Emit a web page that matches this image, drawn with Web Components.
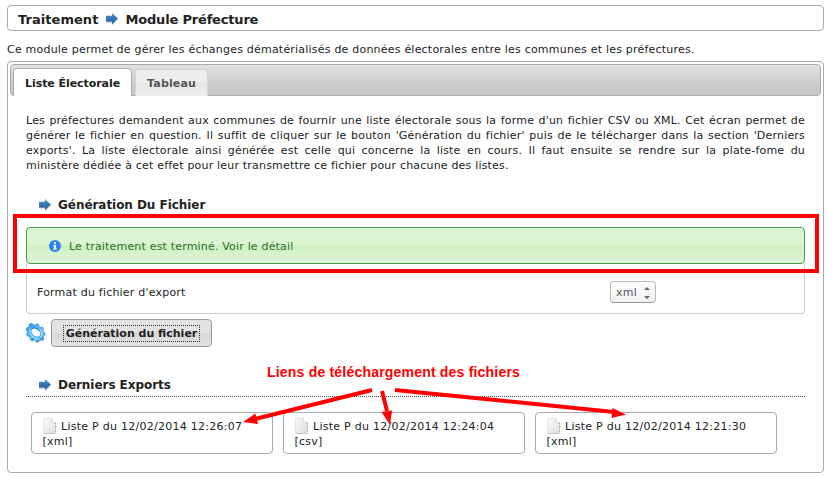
<!DOCTYPE html>
<html lang="fr">
<head>
<meta charset="utf-8">
<title>Module Préfecture</title>
<style>
body{margin:0;background:#fff;color:#222;font:11px/15px "DejaVu Sans",Verdana,sans-serif;letter-spacing:.21px}
</style>
</head>
<body>
<prefecture-page></prefecture-page>
<script>
function define(name, html) {
  const t = document.createElement('template');
  t.innerHTML = html;
  customElements.define(name, class extends HTMLElement {
    constructor() {
      super();
      this.attachShadow({mode: 'open'}).append(t.content.cloneNode(true));
    }
  });
}

define('arrow-icon', `<style>:host{display:block;width:12px;height:12px}svg{display:block}</style>
<svg width="12" height="12" viewBox="0 0 12 12"><defs><linearGradient id="a" x2="0" y2="1"><stop stop-color="#5f9acb"/><stop offset=".5" stop-color="#3774ae"/><stop offset="1" stop-color="#245f9a"/></linearGradient></defs>
<path d="M.5 9.500H6.500V11.800L12 6.500" fill="none" stroke="#000" stroke-opacity=".13" stroke-width="1.2"/>
<path d="M0 2.800H6V0L12 5.600 6 11.200V8.700H0Z" fill="url(#a)"/></svg>`);

define('info-icon', `<style>:host{display:block;width:12px;height:12px}svg{display:block}</style>
<svg width="12" height="12" viewBox="0 0 12 12"><circle cx="6" cy="6" r="6" fill="#2a82f8"/><path d="M5 2H7V4H5ZM4.3 5H7V8.5H7.8V9.8H4.3V8.5H5V6.2H4.3Z" fill="#fff"/></svg>`);

define('gear-icon', `<style>:host{display:block;width:20px;height:20px}svg{display:block}</style>
<svg width="20" height="20" viewBox="0 0 20 20"><defs><linearGradient id="g" x2="1" y2="1"><stop stop-color="#2a8fe4"/><stop offset=".35" stop-color="#4db4f8"/><stop offset=".7" stop-color="#7bd0fc"/><stop offset="1" stop-color="#1470c4"/></linearGradient></defs>
<g transform="translate(-.3 -.2)"><path fill="url(#g)" stroke="#2187d8" stroke-width=".7" fill-rule="evenodd" d="M5 .8 7.2 1.3 8 2.4 9.6 2.3 10.8 1 13 1.8 13.2 3.6 14.5 4.6 16.6 4.3 17.9 6.3 17 7.9 17.6 9.3 19.3 10 19.2 12.3 17.9 12.9 17.500 14.3 18.2 16.2 16.8 17.7 15.1 17.2 13.5 17.8 12.8 19.3 10.7 19.3 9.8 17.9 8.1 17.4 6.5 18.2 4.5 16.9 4.5 15.1 3.3 13.3 1.8 13.4.8 11.3 1.9 9.8 1.6 8.200.3 7.2.8 5 2.4 4.6 3.4 3.600 3.2 1.9ZM7 5C4.600 6.200 4.900 9 6.600 11.500 8.500 14.200 12.300 15.300 14.200 13.200 15.700 11.300 14.500 8.400 12.600 6.500 11 4.900 8.800 4.200 7 5Z"/>
<path fill="none" stroke="#b4e6ff" stroke-width=".9" d="M4.3 5.400C2.900 8.900 6 15.600 11.500 15.900M14.500 6.800C16.500 9.500 16.500 12 15.300 14.400"/>
<path fill="none" stroke="#1261ad" stroke-width="1" d="M5.800 7C7 4.300 11 4.700 13.500 8.100M6 16.600 8 16.100M11 18.300H12.300"/></g></svg>`);

define('file-icon', `<style>:host{display:block;width:13px;height:16px}svg{display:block}</style>
<svg width="14" height="16" viewBox="0 0 14 16"><defs><linearGradient id="f" x2="1" y2="1"><stop stop-color="#fafafa"/><stop offset="1" stop-color="#dedede"/></linearGradient></defs>
<path d="M.5.5H8.5L12.5 4.5V15.5H.5Z" fill="url(#f)" stroke="#e6e6e6"/><path d="M.5 15.5H12.5" fill="none" stroke="#c6c6c6"/><path d="M8.5.5V4.5H12.5" fill="#fafafa" stroke="#dcdcdc"/><path d="M12.5 5V15" stroke="#9a9a9a" stroke-dasharray="1 1"/></svg>`);

define('page-title', `<style>
:host{display:flex;box-sizing:border-box;height:26px;padding:2px 10px 0;border:1px solid #aaa;border-radius:4px;align-items:center;font-weight:bold;font-size:13px;letter-spacing:-.18px}
arrow-icon{margin:0 7px 0 8px}
::slotted([slot=section]){letter-spacing:.05px}
</style><slot name="section"></slot><arrow-icon></arrow-icon><slot></slot>`);

define('tab-item', `<style>
:host{display:block;box-sizing:border-box;height:27px;margin-top:1px;padding:6px 11px 0;border:1px solid #d3d3d3;border-bottom:0;border-radius:4px 4px 0 0;background:linear-gradient(#eee 0 50%,#e6e6e6 50%,#ededed);color:#555;font-weight:bold;letter-spacing:.15px}
:host([active]){height:28px;margin-top:0;padding-top:7px;border-color:#aaa;background:#fff;color:#212121;letter-spacing:-.06px}
</style><slot></slot>`);

define('tab-bar', `<style>
:host{display:flex;box-sizing:border-box;height:32px;padding:3px 2px 0;gap:3px;border:1px solid #aaa;border-radius:4px;background:linear-gradient(#e2e2e2,#c9c9c9 75%);align-items:flex-start}
</style><slot></slot>`);

define('sub-title', `<style>
:host{display:flex;align-items:center;gap:7px;height:20px;padding-left:13px;font-weight:bold;font-size:12px;letter-spacing:-.05px}
</style><arrow-icon></arrow-icon><slot></slot>`);

define('status-message', `<style>
:host{display:flex;box-sizing:border-box;height:37px;align-items:center;gap:8px;padding:1px 0 0 22px;border:1px solid #4aa04a;border-radius:4px;color:#2c6e2c;letter-spacing:.18px;background:linear-gradient(#dbf4d2 0 48%,#cff0c3 50%,#e1f3da)}
info-icon{margin-top:-1px}
</style><info-icon></info-icon><slot></slot>`);

define('mini-select', `<style>
:host{display:flex;box-sizing:border-box;width:46px;height:22px;padding:1px 5px 0;border:1px solid #bbb;border-bottom-color:#999;border-radius:4px;align-items:center;justify-content:space-between;background:linear-gradient(#fff,#f0f0f0);color:#555}
svg{display:block;margin-right:-1px}
</style><slot></slot><svg width="8" height="13" viewBox="0 0 8 13"><path d="M1 4 4 1 7 4ZM1 10H7L4 13Z" fill="#666"/></svg>`);

define('form-field', `<style>
:host{display:grid;box-sizing:border-box;grid-template-columns:573px auto;justify-content:start;align-items:center;height:50px;padding:6px 10px 0;border:1px solid #ccc;border-top:0;border-radius:0 0 4px 4px}
::slotted([slot=label]){padding-top:1px}
</style><slot name="label"></slot><slot></slot>`);

define('push-button', `<style>
:host{display:block}
button{box-sizing:border-box;display:block;width:161px;height:28px;padding:0;border:1px solid #999;border-radius:4px;background:linear-gradient(#e2e2e2 0 50%,#d6d6d6 50%,#e4e4e4);color:#212121;font:bold 11px/15px "DejaVu Sans",sans-serif;letter-spacing:0}
span{display:block;box-sizing:border-box;height:17px;margin:0 11px;border:1px dotted #333;white-space:nowrap}
</style><button><span><slot></slot></span></button>`);

define('export-card', `<style>
:host{display:block;box-sizing:border-box;width:242px;height:42px;padding:5px 10px 0 11px;border:1px solid #aaa;border-radius:4px;letter-spacing:.26px}
div{height:16px;white-space:nowrap;display:flex;align-items:center;gap:5px}
p{margin:0 0 0 -.5px}
</style><div><file-icon></file-icon><slot></slot></div><p><slot name="format"></slot></p>`);

define('red-notes', `<style>
:host{position:absolute;inset:0;pointer-events:none}
svg{position:absolute;left:0;top:0}
b{position:absolute;left:267px;top:363px;font:bold 14px/18px "Liberation Sans",Arial,sans-serif;letter-spacing:.2px;color:red;white-space:nowrap}
</style><svg width="827" height="477" viewBox="0 0 827 477"><rect x="15" y="216" width="802" height="55" fill="none" stroke="red" stroke-width="4"/>
<path d="M372 390 255 419M382 391 387 411M395 390 614 412" fill="none" stroke="red" stroke-width="4"/>
<path d="M243 422 255.500 413.500 258 424ZM390 425 381.500 412 392 410.500ZM626 414.500 611.500 418 612.500 408Z" fill="red"/></svg><b><slot></slot></b>`);

define('prefecture-page', `<style>
:host{display:block;position:relative;box-sizing:border-box;width:827px;height:477px;padding:5px 3px 0 7px;overflow:hidden}
.intro{margin:11px 0 4px;height:15px;white-space:nowrap}
.panel{box-sizing:border-box;height:412px;border:1px solid #aaa;border-radius:4px;padding:2px}
.body{width:779px;padding:17px 0 0 16px}
.l{text-align:justify;text-align-last:justify;white-space:nowrap;height:15px;letter-spacing:.19px}
.l:last-child{text-align-last:left}
.first{margin:22px 0 12px}
.action{display:flex;gap:5px;margin-top:5px;align-items:center}
.second{margin-top:27px;height:22px;border-bottom:1px dotted #555}
.cards{display:flex;gap:10px;padding:15px 5px 0}
</style>
<page-title><span slot="section">Traitement</span><span>Module Préfecture</span></page-title>
<div class="intro"><span>Ce module permet de gérer les échanges dématérialisés de données électorales entre les communes et les préfectures.</span></div>
<div class="panel">
<tab-bar><tab-item active>Liste Électorale</tab-item><tab-item>Tableau</tab-item></tab-bar>
<div class="body">
<div class="text"><div class="l">Les préfectures demandent aux communes de fournir une liste électorale sous la forme d'un fichier CSV ou XML. Cet écran permet de</div>
<div class="l">générer le fichier en question. Il suffit de cliquer sur le bouton 'Génération du fichier' puis de le télécharger dans la section 'Derniers</div>
<div class="l">exports'. La liste électorale ainsi générée est celle qui concerne la liste en cours. Il faut ensuite se rendre sur la plate-fome du</div>
<div class="l">ministère dédiée à cet effet pour leur transmettre ce fichier pour chacune des listes.</div></div>
<sub-title class="first">Génération Du Fichier</sub-title>
<status-message>Le traitement est terminé. Voir le détail</status-message>
<form-field><span slot="label">Format du fichier d'export</span><mini-select>xml</mini-select></form-field>
<div class="action"><gear-icon></gear-icon><push-button>Génération du fichier</push-button></div>
<sub-title class="second">Derniers Exports</sub-title>
<div class="cards">
<export-card>Liste P du 12/02/2014 12:26:07<span slot="format">[xml]</span></export-card>
<export-card>Liste P du 12/02/2014 12:24:04<span slot="format">[csv]</span></export-card>
<export-card>Liste P du 12/02/2014 12:21:30<span slot="format">[xml]</span></export-card>
</div></div></div>
<red-notes>Liens de téléchargement des fichiers</red-notes>`);
</script>
</body>
</html>
